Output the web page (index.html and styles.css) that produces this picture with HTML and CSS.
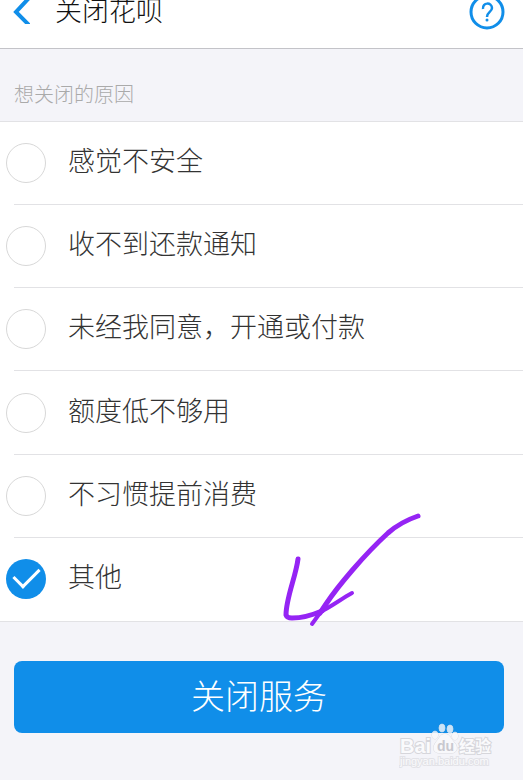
FILE: index.html
```
<!DOCTYPE html>
<html lang="zh-CN">
    <head>
        <meta charset="UTF-8">
        <meta name="viewport" content="width=device-width, initial-scale=1">
        <title>关闭花呗</title>
        <link rel="stylesheet" href="styles.css">
    </head>
    <body>
        <header class="header">
            <a class="back" href="#" aria-label="返回">
                <svg width="18" height="24" viewBox="0 0 18 24">
                    <path d="M17 -2 L4 12 L17 25"/>
                </svg>
            </a>
            <h1 class="title">关闭花呗</h1>
            <a class="help" href="#" aria-label="帮助">
                <svg width="36" height="30" viewBox="0 6 36 30">
                    <circle cx="18" cy="18" r="16"/>
                    <path class="mark" d="M14 15 C13 8 23 8 23 14 C23 18 18 18 18 23"/>
                    <circle class="dot" cx="18" cy="26" r="1.5"/>
                </svg>
            </a>
        </header>

        <form class="reasons">
            <h2 class="caption">想关闭的原因</h2>
            <div class="list">
                <label class="option">
                    <input class="radio" type="radio" name="reason">
                    <span class="text">感觉不安全</span>
                </label>
                <label class="option">
                    <input class="radio" type="radio" name="reason">
                    <span class="text">收不到还款通知</span>
                </label>
                <label class="option">
                    <input class="radio" type="radio" name="reason">
                    <span class="text">未经我同意，开通或付款</span>
                </label>
                <label class="option">
                    <input class="radio" type="radio" name="reason">
                    <span class="text">额度低不够用</span>
                </label>
                <label class="option">
                    <input class="radio" type="radio" name="reason">
                    <span class="text">不习惯提前消费</span>
                </label>
                <label class="option">
                    <input class="radio" type="radio" name="reason" checked>
                    <span class="text">其他</span>
                </label>
            </div>
            <div class="footer">
                <button class="submit" type="button">关闭服务</button>
                <!-- watermark -->
                <svg class="watermark" width="100" height="50" viewBox="0 0 100 50">
                    <g class="paw">
                        <ellipse cx="36" cy="15" rx="3" ry="4"/>
                        <ellipse cx="43" cy="8" rx="3" ry="4"/>
                        <ellipse cx="51" cy="9" rx="3" ry="4"/>
                        <ellipse cx="56" cy="16" rx="3" ry="4"/>
                        <path d="M46 14 C51 14 52 19 55 22 C60 27 58 33 53 33 L40 33 C34 33 33 27 37 22 C40 19 41 14 46 14 Z"/>
                    </g>
                    <text class="brand" x="1" y="33">Bai</text>
                    <text class="du" x="38" y="31">du</text>
                    <text class="cn" x="60" y="32">经验</text>
                    <text class="site" x="1" y="45">jingyan.baidu.com</text>
                </svg>
            </div>
        </form>

        <!-- hand drawn arrow to the button -->
        <svg class="arrow" width="144" height="120" viewBox="280 510 144 120">
            <path d="M418 516 C409 519 396 526 388 533 C364 555 338 586 326 604 L320 613"/>
            <path d="M298 559 C296 576 286 598 286 615 Q287 618 292 618 C303 618 315 614 322 611"/>
            <path class="thin" d="M320 613 L312 624 M320 612 C331 607 341 599 352 593"/>
        </svg>
    </body>
</html>
```
FILE: styles.css
```
*{
    margin: 0;
    padding: 0;
    box-sizing: border-box;
}
body{
    position: relative;
    background-color: #f4f4f9;
    color: #333;
    font-family: "Noto Sans CJK SC", sans-serif;
    font-weight: 300;
}
.header{
    display: flex;
    align-items: flex-start;
    height: 49px;
    padding: 0 18px 0 12px;
    background-color: white;
    border-bottom: 1px solid #c3c3c8;
    overflow: hidden;
}
.header svg{
    display: block;
    fill: none;
    stroke: #108ee9;
    stroke-width: 3;
}
.back svg{
    stroke-width: 4;
}
.title{
    flex: 1;
    margin-left: 25px;
    color: #111;
    font-size: 27px;
    font-weight: 300;
    line-height: 20px;
}
.help .mark{
    stroke-width: 2.5;
}
.help .dot{
    fill: #108ee9;
    stroke: none;
}
.caption{
    padding: 33px 14px 15px;
    color: #aaa;
    font-size: 20px;
    font-weight: 300;
    line-height: 24px;
}
.list{
    display: grid;
    grid-auto-rows: 1fr;
    min-height: 501px;
    padding-left: 14px;
    background-color: white;
    border-top: 1px solid #e2e2e5;
    border-bottom: 1px solid #e2e2e5;
}
.option{
    display: flex;
    align-items: center;
    gap: 22px;
    border-bottom: 1px solid #e2e2e5;
    cursor: pointer;
}
.option:last-child{
    border-bottom: none;
}
.radio{
    appearance: none;
    flex: none;
    width: 40px;
    height: 40px;
    margin-left: -8px;
    border: 1px solid #d8d8d8;
    border-radius: 50%;
    background-color: white;
}
.radio:checked{
    display: grid;
    place-items: center;
    border: none;
    background-color: #108ee9;
}
/* tick */
.radio:checked::before{
    content: "";
    width: 22px;
    height: 12px;
    margin-bottom: 9px;
    border-left: 3px solid white;
    border-bottom: 3px solid white;
    transform: rotate(-45deg);
}
.text{
    padding-bottom: 6px;
    font-size: 27px;
    line-height: 36px;
}
.footer{
    position: relative;
    padding: 39px 19px 47px 14px;
}
.submit{
    display: block;
    width: 100%;
    padding: 10px 0 14px;
    border: none;
    border-radius: 8px;
    background-color: #108ee9;
    color: white;
    font-family: inherit;
    font-size: 34px;
    font-weight: 300;
    line-height: 48px;
    cursor: pointer;
}
.watermark{
    position: absolute;
    right: 24px;
    bottom: 10px;
    pointer-events: none;
    fill: #fafafc;
    stroke: #d6d6db;
    stroke-width: 2;
    paint-order: stroke;
    font-family: "Liberation Sans", "Noto Sans CJK SC", sans-serif;
    font-weight: bold;
}
.paw{
    stroke-width: 1;
    opacity: 0.8;
}
.brand{
    font-size: 20px;
}
.du{
    fill: #c8c8cf;
    stroke: none;
    font-size: 14px;
}
.cn{
    font-size: 16px;
}
.site{
    stroke: #e2e2e7;
    font-size: 11px;
    font-weight: normal;
}
.arrow{
    position: absolute;
    left: 280px;
    top: 510px;
    pointer-events: none;
    fill: none;
    stroke: #9524f4;
    stroke-width: 5;
    stroke-linecap: round;
    stroke-linejoin: round;
}
.arrow .thin{
    stroke-width: 4;
}
```
